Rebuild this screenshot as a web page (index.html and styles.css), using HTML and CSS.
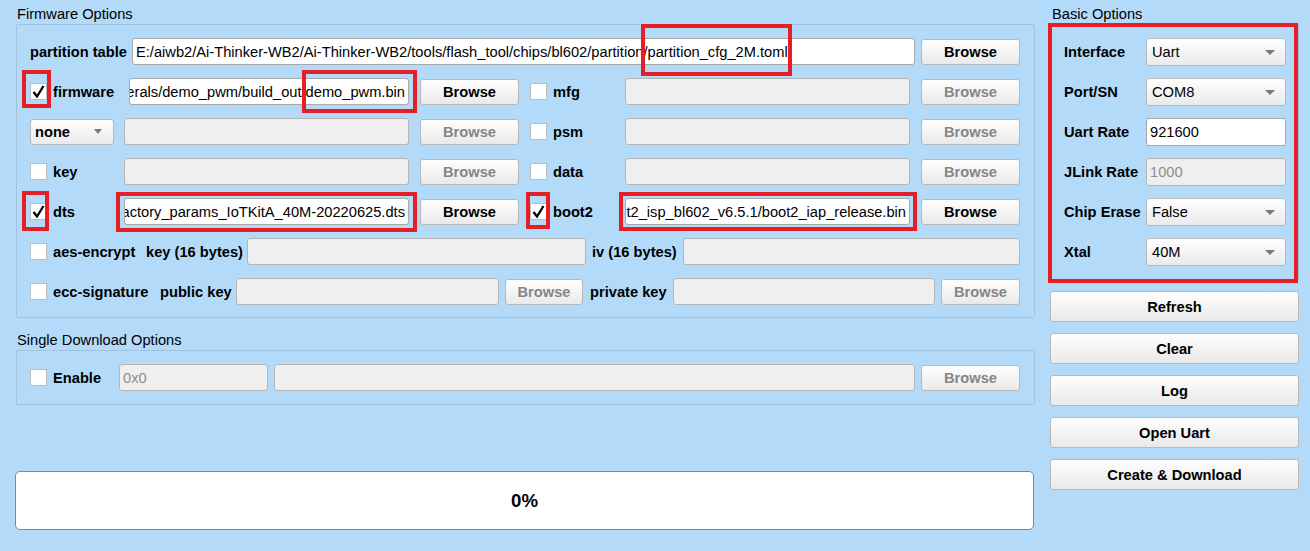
FILE: index.html
```html
<!DOCTYPE html>
<html lang="en">
<head>
    <meta charset="UTF-8">
    <title>BL Dev Cube - IOT</title>
    <link rel="stylesheet" href="styles.css">
</head>
<body>
    <div class="app">
        <div class="main">
            <div class="legend">Firmware Options</div>
            <div class="group fw">
                <div class="row">
                    <span class="lbl w-part">partition table</span>
                    <div class="field grow">E:/aiwb2/Ai-Thinker-WB2/Ai-Thinker-WB2/tools/flash_tool/chips/bl602/partition/partition_cfg_2M.toml</div>
                    <button class="btn browse gap6">Browse</button>
                </div>
                <div class="row">
                    <div class="lead w-fw"><span class="check"><svg width="13" height="13" viewBox="0 0 13 13"><polyline points="1.5,7 5,11.5 11.5,1" fill="none" stroke="#000" stroke-width="2.3"/></svg></span><span class="lbl">firmware</span></div>
                    <div class="field end path-fw">peripherals/demo_pwm/build_out/demo_pwm.bin</div>
                    <button class="btn browse gap11">Browse</button>
                    <div class="lead lead2 gap11"><span class="check"></span><span class="lbl">mfg</span></div>
                    <div class="field off path"></div>
                    <button class="btn browse off gap11">Browse</button>
                </div>
                <div class="row">
                    <div class="lead w-lead"><div class="select sel-none"><span class="lbl">none</span></div></div>
                    <div class="field off path"></div>
                    <button class="btn browse off gap11">Browse</button>
                    <div class="lead lead2 gap11"><span class="check"></span><span class="lbl">psm</span></div>
                    <div class="field off path"></div>
                    <button class="btn browse off gap11">Browse</button>
                </div>
                <div class="row">
                    <div class="lead w-lead"><span class="check"></span><span class="lbl">key</span></div>
                    <div class="field off path"></div>
                    <button class="btn browse off gap11">Browse</button>
                    <div class="lead lead2 gap11"><span class="check"></span><span class="lbl">data</span></div>
                    <div class="field off path"></div>
                    <button class="btn browse off gap11">Browse</button>
                </div>
                <div class="row">
                    <div class="lead w-lead"><span class="check"><svg width="13" height="13" viewBox="0 0 13 13"><polyline points="1.5,7 5,11.5 11.5,1" fill="none" stroke="#000" stroke-width="2.3"/></svg></span><span class="lbl">dts</span></div>
                    <div class="field end path">device_tree/bl_factory_params_IoTKitA_40M-20220625.dts</div>
                    <button class="btn browse gap11">Browse</button>
                    <div class="lead lead2 gap11"><span class="check"><svg width="13" height="13" viewBox="0 0 13 13"><polyline points="1.5,7 5,11.5 11.5,1" fill="none" stroke="#000" stroke-width="2.3"/></svg></span><span class="lbl">boot2</span></div>
                    <div class="field end path">builtin_imgs/boot2_isp_bl602_v6.5.1/boot2_iap_release.bin</div>
                    <button class="btn browse gap11">Browse</button>
                </div>
                <div class="row">
                    <div class="lead w-aes"><span class="check"></span><span class="lbl">aes-encrypt</span></div>
                    <span class="lbl w-key">key (16 bytes)</span>
                    <div class="field off w-aeskey"></div>
                    <span class="lbl w-iv gap6">iv (16 bytes)</span>
                    <div class="field off grow"></div>
                </div>
                <div class="row">
                    <div class="lead w-ecc"><span class="check"></span><span class="lbl">ecc-signature</span></div>
                    <span class="lbl w-pub">public key</span>
                    <div class="field off w-ecckey"></div>
                    <button class="btn off w-ebrowse gap6">Browse</button>
                    <span class="lbl w-priv gap7">private key</span>
                    <div class="field off w-ecckey2"></div>
                    <button class="btn off w-ebrowse2 gap6">Browse</button>
                </div>
            </div>

            <div class="legend legend-single">Single Download Options</div>
            <div class="group">
                <div class="row">
                    <div class="lead w-enable"><span class="check"></span><span class="lbl">Enable</span></div>
                    <div class="field off w-addr">0x0</div>
                    <div class="field off grow gap6"></div>
                    <button class="btn browse off gap6">Browse</button>
                </div>
            </div>

            <div class="progress">0%</div>
        </div>

        <div class="side">
            <div class="legend legend-side">Basic Options</div>
            <div class="group basic">
                <div class="opt-row">
                    <span class="lbl opt-lbl">Interface</span>
                    <div class="select sel-opt">Uart</div>
                </div>
                <div class="opt-row">
                    <span class="lbl opt-lbl">Port/SN</span>
                    <div class="select sel-opt">COM8</div>
                </div>
                <div class="opt-row">
                    <span class="lbl opt-lbl">Uart Rate</span>
                    <div class="field opt-field">921600</div>
                </div>
                <div class="opt-row">
                    <span class="lbl opt-lbl">JLink Rate</span>
                    <div class="field off opt-field">1000</div>
                </div>
                <div class="opt-row">
                    <span class="lbl opt-lbl">Chip Erase</span>
                    <div class="select sel-opt">False</div>
                </div>
                <div class="opt-row">
                    <span class="lbl opt-lbl">Xtal</span>
                    <div class="select sel-opt">40M</div>
                </div>
            </div>
            <div class="actions">
                <button class="btn wide">Refresh</button>
                <button class="btn wide">Clear</button>
                <button class="btn wide">Log</button>
                <button class="btn wide">Open Uart</button>
                <button class="btn wide">Create &amp; Download</button>
            </div>
        </div>

        <!-- red highlight boxes drawn over the screenshot -->
        <div class="mark m-toml"></div>
        <div class="mark m-fwcheck"></div>
        <div class="mark m-fwpath"></div>
        <div class="mark m-dtscheck"></div>
        <div class="mark m-dtspath"></div>
        <div class="mark m-bootcheck"></div>
        <div class="mark m-bootpath"></div>
        <div class="mark m-basic"></div>
    </div>
</body>
</html>
```

FILE: styles.css
```css
body {
    margin: 0;
    background-color: #b3dbf9;
    font-family: "Liberation Sans", Arial, sans-serif;
    font-size: 11pt;
    color: #000;
}
.app {
    position: relative;
    display: flex;
    gap: 14px;
    width: 1310px;
    height: 551px;
    padding: 6px 0 0 16px;
    box-sizing: border-box;
    overflow: hidden;
}
.main {
    width: 1019px;
}
.side {
    width: 250px;
}
.legend {
    line-height: 16px;
    margin-bottom: 2px;
    padding-left: 1px;
}
.legend-single {
    margin-top: 14px;
}
.legend-side {
    padding-left: 3px;
}
.group {
    display: flex;
    flex-direction: column;
    gap: 13px;
    border: 1px solid #a0c4e0;
    border-radius: 2px;
    padding: 13px 14px 13px 13px;
}
.group.fw {
    padding-bottom: 12px;
}
.row {
    display: flex;
    align-items: center;
    height: 27px;
}
.lbl {
    font-weight: bold;
    white-space: nowrap;
}
.lead {
    display: flex;
    align-items: center;
    gap: 6px;
    flex-shrink: 0;
}
.check {
    width: 17px;
    height: 17px;
    box-sizing: border-box;
    border: 1px solid #bcbcbc;
    background: #fff;
    display: inline-flex;
    align-items: center;
    justify-content: center;
    flex-shrink: 0;
}
.field {
    height: 27px;
    box-sizing: border-box;
    border: 1px solid #a8a8a8;
    border-radius: 3px;
    background: #fff;
    padding: 0 3px;
    display: flex;
    align-items: center;
    overflow: hidden;
    white-space: nowrap;
    flex-shrink: 0;
}
.field.end {
    justify-content: flex-end;
}
.field.off {
    background: #efefef;
    border-color: #b5b5b5;
    color: #8c8c8c;
}
.grow {
    flex: 1;
    min-width: 0;
}
.btn {
    height: 26px;
    box-sizing: border-box;
    border: 1px solid #b9b9b9;
    border-radius: 3px;
    background: linear-gradient(#fefefe, #e9e9e9);
    font: bold 11pt "Liberation Sans", Arial, sans-serif;
    color: #000;
    padding: 0;
    flex-shrink: 0;
}
.btn.off {
    color: #858585;
}
.select {
    display: flex;
    align-items: center;
    justify-content: space-between;
    box-sizing: border-box;
    border: 1px solid #b9b9b9;
    border-radius: 3px;
    background: linear-gradient(#fefefe, #eaeaea);
    white-space: nowrap;
}
.select::after {
    content: "";
    border-left: 4px solid transparent;
    border-right: 4px solid transparent;
    border-top: 5px solid #7a7a7a;
}
.gap6 { margin-left: 6px; }
.gap7 { margin-left: 7px; }
.gap11 { margin-left: 11px; }

/* firmware option columns */
.w-part { width: 102px; }
.w-lead { width: 94px; }
.w-fw { width: 99px; }
.path-fw { width: 280px; }
.path { width: 285px; }
.browse { width: 99px; }
.lead2 { width: 95px; }
.sel-none {
    width: 84px;
    height: 26px;
    padding: 0 11px 0 4px;
}
.w-aes { width: 116px; }
.w-key { width: 101px; }
.w-aeskey { width: 339px; }
.w-iv { width: 91px; }
.w-ecc { width: 130px; }
.w-pub { width: 76px; }
.w-ecckey { width: 263px; }
.w-ebrowse { width: 78px; }
.w-priv { width: 83px; }
.w-ecckey2 { width: 262px; }
.w-ebrowse2 { width: 79px; }
.w-enable { width: 89px; }
.w-addr { width: 149px; }

.progress {
    margin: 66px 1px 0 -1px;
    height: 59px;
    box-sizing: border-box;
    border: 1px solid #858585;
    border-radius: 5px;
    background: #fff;
    display: flex;
    align-items: center;
    justify-content: center;
    font-weight: bold;
    font-size: 14pt;
}

/* basic options */
.basic {
    gap: 12px;
    padding: 13px 11px 14px 14px;
}
.opt-row {
    display: flex;
    align-items: center;
    height: 28px;
}
.opt-lbl {
    width: 82px;
}
.sel-opt {
    width: 140px;
    height: 28px;
    padding: 0 10px 0 5px;
}
.sel-opt::after {
    border-left-width: 5px;
    border-right-width: 5px;
}
.opt-field {
    width: 140px;
    height: 28px;
}
.actions {
    display: flex;
    flex-direction: column;
    gap: 11px;
    margin-top: 10px;
    padding-left: 1px;
}
.btn.wide {
    width: 249px;
    height: 31px;
}

/* red annotation boxes */
.mark {
    position: absolute;
    box-sizing: border-box;
    border: 4px solid #e61f26;
}
.m-toml { left: 641px; top: 24px; width: 151px; height: 52px; }
.m-fwcheck { left: 22px; top: 70px; width: 29px; height: 38px; }
.m-fwpath { left: 302px; top: 70px; width: 115px; height: 43px; }
.m-dtscheck { left: 22px; top: 191px; width: 27px; height: 40px; }
.m-dtspath { left: 116px; top: 192px; width: 301px; height: 40px; }
.m-bootcheck { left: 526px; top: 192px; width: 24px; height: 37px; }
.m-bootpath { left: 619px; top: 192px; width: 298px; height: 39px; }
.m-basic { left: 1048px; top: 23px; width: 250px; height: 260px; }
```
